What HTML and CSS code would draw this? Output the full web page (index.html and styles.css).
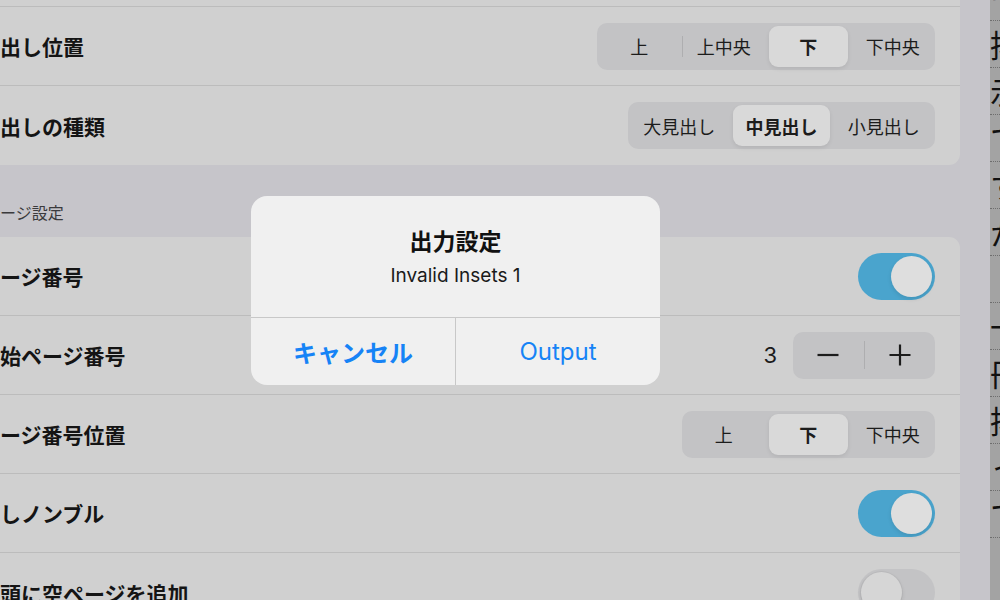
FILE: index.html
```html
<!DOCTYPE html>
<html lang="ja">
<head>
  <meta charset="UTF-8" />
  <meta name="viewport" content="width=device-width, initial-scale=1.0" />
  <title>出力設定</title>
  <link rel="stylesheet" href="styles.css">
</head>
<body>
  <div class="screen">
    <main class="settings">
      <div class="list">
        <section class="card card-first">
          <div class="row">
            <span class="label">見出しを表示</span>
          </div>
          <div class="row">
            <span class="label">見出し位置</span>
            <div class="segmented">
              <span class="seg">上</span>
              <span class="seg divided">上中央</span>
              <span class="seg selected">下</span>
              <span class="seg">下中央</span>
            </div>
          </div>
          <div class="row">
            <span class="label">見出しの種類</span>
            <div class="segmented wide">
              <span class="seg">大見出し</span>
              <span class="seg selected">中見出し</span>
              <span class="seg">小見出し</span>
            </div>
          </div>
        </section>

        <h3 class="section-title">ページ設定</h3>

        <section class="card">
          <div class="row">
            <span class="label">ページ番号</span>
            <span class="toggle on"><span class="knob"></span></span>
          </div>
          <div class="row">
            <span class="label">開始ページ番号</span>
            <div class="stepper-group">
              <span class="value">3</span>
              <div class="stepper">
                <span class="step">
                  <svg width="24" height="24" viewBox="0 0 24 24"><path d="M1.5 12h21" stroke="#1c1c1c" stroke-width="2.2"/></svg>
                </span>
                <span class="step-divider"></span>
                <span class="step">
                  <svg width="24" height="24" viewBox="0 0 24 24"><path d="M1.5 12h21M12 1.5v21" stroke="#1c1c1c" stroke-width="2.2"/></svg>
                </span>
              </div>
            </div>
          </div>
          <div class="row">
            <span class="label">ページ番号位置</span>
            <div class="segmented">
              <span class="seg">上</span>
              <span class="seg selected">下</span>
              <span class="seg">下中央</span>
            </div>
          </div>
          <div class="row">
            <span class="label">隠しノンブル</span>
            <span class="toggle on"><span class="knob"></span></span>
          </div>
          <div class="row">
            <span class="label">先頭に空ページを追加</span>
            <span class="toggle"><span class="knob"></span></span>
          </div>
        </section>
      </div>
    </main>

    <aside class="preview">
      <span class="cell">そ</span>
      <span class="cell">排</span>
      <span class="cell">示</span>
      <span class="cell">で</span>
      <span class="cell">す</span>
      <span class="cell">か</span>
      <span class="cell"></span>
      <span class="cell">一</span>
      <span class="cell">冊</span>
      <span class="cell">排</span>
      <span class="cell">っ</span>
      <span class="cell">て</span>
    </aside>

    <div class="alert">
      <div class="alert-body">
        <div class="alert-title">出力設定</div>
        <div class="alert-message">Invalid Insets 1</div>
      </div>
      <div class="alert-actions">
        <span class="alert-btn cancel">キャンセル</span>
        <span class="alert-btn">Output</span>
      </div>
    </div>
  </div>
</body>
</html>
```

FILE: styles.css
```css
html, body {
  margin: 0;
  padding: 0;
}
body {
  font-family: "Noto Sans CJK JP", sans-serif;
  color: #141414;
  background: #c6c5ca;
}
.screen {
  position: relative;
  display: flex;
  width: 1000px;
  height: 600px;
  overflow: hidden;
}
.settings {
  width: 990px;
  flex: none;
  overflow: hidden;
  background: #c6c5ca;
}
.list {
  margin-left: -41px;
  margin-right: 30px;
}
.card {
  background: #d0d0d0;
  border-radius: 11px;
  overflow: hidden;
}
.card-first {
  margin-top: -72px;
}
.row {
  box-sizing: border-box;
  height: 79px;
  display: flex;
  align-items: center;
  justify-content: space-between;
  padding: 0 25px 0 20px;
  border-bottom: 1px solid #bcbcbc;
}
.row:last-child {
  border-bottom: none;
}
.label {
  font-size: 21px;
  font-weight: 600;
  white-space: nowrap;
}
.section-title {
  margin: 0;
  padding: 37px 0 14px 25px;
  font-size: 16px;
  line-height: 21px;
  font-weight: 400;
  color: #3a3a3c;
}

/* segmented control */
.segmented {
  display: flex;
  align-items: center;
  height: 47px;
  background: #c3c3c5;
  border-radius: 10px;
}
.seg {
  position: relative;
  width: 84.5px;
  height: 41px;
  display: flex;
  align-items: center;
  justify-content: center;
  font-size: 18px;
  color: #1c1c1c;
}
.wide .seg {
  width: 102.3px;
}
.seg.selected {
  margin: 0 3px;
  width: 78.5px;
  background: #d9d9d9;
  border-radius: 9px;
  font-weight: 700;
  box-shadow: 0 2px 4px rgba(0, 0, 0, 0.08);
}
.wide .seg.selected {
  width: 96.3px;
}
.seg.divided::before {
  content: "";
  position: absolute;
  left: 0;
  top: 10px;
  bottom: 10px;
  width: 1px;
  background: #aeaeb0;
}

/* toggle */
.toggle {
  position: relative;
  width: 77px;
  height: 47px;
  border-radius: 24px;
  background: #c3c3c5;
  flex: none;
}
.toggle .knob {
  position: absolute;
  top: 3px;
  left: 3px;
  width: 41px;
  height: 41px;
  border-radius: 50%;
  background: #d6d6d6;
  box-shadow: 0 2px 4px rgba(0, 0, 0, 0.12), 0 0 0 1px rgba(0, 0, 0, 0.03);
}
.toggle.on {
  background: #4aa4cd;
}
.toggle.on .knob {
  left: 33px;
  background: #dedede;
  box-shadow: 0 2px 4px rgba(0, 0, 0, 0.1);
}

/* stepper */
.stepper-group {
  display: flex;
  align-items: center;
  gap: 16px;
}
.value {
  font-family: "Inter", sans-serif;
  font-size: 22px;
  color: #1c1c1c;
}
.stepper {
  display: flex;
  align-items: center;
  width: 142px;
  height: 47px;
  background: #c3c3c5;
  border-radius: 10px;
}
.step {
  flex: 1;
  display: flex;
  align-items: center;
  justify-content: center;
}
.step svg {
  display: block;
}
.step-divider {
  width: 1px;
  height: 28px;
  background: #aeaeb0;
}

/* preview strip */
.preview {
  width: 10px;
  flex: none;
  overflow: hidden;
  display: flex;
  flex-direction: column;
  margin-top: -26px;
  background: #a3a3a3;
}
.cell {
  box-sizing: border-box;
  flex: none;
  display: flex;
  align-items: center;
  width: 40px;
  height: 47px;
  border-bottom: 1px dotted #6e6e6e;
  font-size: 31px;
  line-height: 46px;
  color: #111;
  overflow: hidden;
}

/* alert */
.alert {
  position: absolute;
  left: 251px;
  top: 196px;
  width: 409px;
  height: 189px;
  background: #f0f0f0;
  border-radius: 16px;
  display: flex;
  flex-direction: column;
  overflow: hidden;
}
.alert-body {
  box-sizing: border-box;
  height: 122px;
  padding-top: 27px;
  text-align: center;
  border-bottom: 1px solid #c8c8c8;
}
.alert-title {
  font-size: 23px;
  line-height: 34px;
  font-weight: 700;
  color: #111;
}
.alert-message {
  margin-top: 6px;
  font-family: "Inter", "Noto Sans CJK JP", sans-serif;
  font-size: 19px;
  line-height: 26px;
  color: #1a1a1a;
}
.alert-actions {
  flex: 1;
  display: flex;
}
.alert-btn {
  flex: 1;
  display: flex;
  align-items: center;
  justify-content: center;
  font-family: "Inter", "Noto Sans CJK JP", sans-serif;
  font-size: 24px;
  color: #1683f6;
}
.alert-btn + .alert-btn {
  border-left: 1px solid #c8c8c8;
}
.alert-btn.cancel {
  font-family: "Noto Sans CJK JP", sans-serif;
  font-weight: 700;
}
```
